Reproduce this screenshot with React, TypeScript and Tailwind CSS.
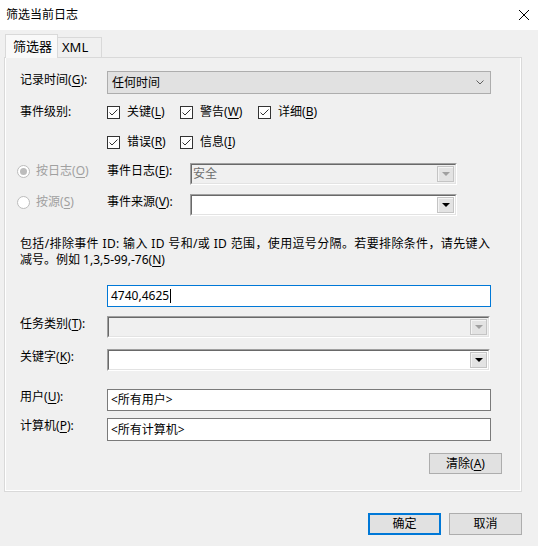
import React from "react";

function Mn({ k }: { k: string }) {
  return (
    <>
      (<span className="underline underline-offset-[2px] decoration-[1px]">{k}</span>)
    </>
  );
}

function Check({ label }: { label: React.ReactNode }) {
  return (
    <span className="flex items-center gap-[7px]">
      <span className="flex h-[13px] w-[13px] items-center justify-center border border-[#333] bg-white">
        <svg width="11" height="11" viewBox="0 0 11 11">
          <path d="M1.5 5.5 L4 8 L9.5 2.5" fill="none" stroke="#333" strokeWidth="1" />
        </svg>
      </span>
      <span className="leading-[16px]">{label}</span>
    </span>
  );
}

function Radio({ checked, label }: { checked?: boolean; label: React.ReactNode }) {
  return (
    <span className="flex h-[16px] w-[90px] items-center gap-[6px] text-[#a0a0a0]">
      <span className="flex h-[13px] w-[13px] items-center justify-center rounded-full border border-[#bcbcbc] bg-white">
        {checked ? <span className="h-[7px] w-[7px] rounded-full bg-[#bcbcbc]" /> : null}
      </span>
      <span className="leading-[16px]">{label}</span>
    </span>
  );
}

function ArrowButton({ disabled }: { disabled?: boolean }) {
  return (
    <span className="mr-[1px] flex h-[16px] w-[17px] items-center justify-center border border-[#c4c4c4] bg-[#e3e3e3] shadow-[inset_1px_1px_0_#f4f4f4]">
      <svg width="8" height="4" viewBox="0 0 8 4">
        <polygon points="0,0 8,0 4,4" fill={disabled ? "#a0a0a0" : "#000"} />
      </svg>
    </span>
  );
}

function Sunken({
  width,
  disabled,
  value,
}: {
  width: string;
  disabled?: boolean;
  value?: string;
}) {
  return (
    <div
      className={`${width} h-[22px] border border-t-[#a0a0a0] border-l-[#a0a0a0] border-r-white border-b-white`}
    >
      <div
        className={`flex h-full items-center border border-t-[#696969] border-l-[#696969] border-r-[#e3e3e3] border-b-[#e3e3e3] ${
          disabled ? "bg-[#f0f0f0]" : "bg-white"
        }`}
      >
        <span className="flex-1 pl-[1px] leading-[16px] text-[#6d6d6d]">{value}</span>
        <ArrowButton disabled={disabled} />
      </div>
    </div>
  );
}

function Label({ children, w }: { children: React.ReactNode; w: string }) {
  return <span className={`${w} shrink-0 leading-[16px]`}>{children}</span>;
}

export default function App() {
  return (
    <div className="flex h-[546px] w-[538px] flex-col overflow-hidden bg-[#f0f0f0] font-['Noto_Sans','Noto_Sans_CJK_SC',sans-serif] text-[12px] text-black">
      <div className="flex h-[30px] shrink-0 items-center justify-between bg-white pl-[6px] pr-[9px]">
        <span className="leading-[16px]">筛选当前日志</span>
        <svg width="10" height="10" viewBox="0 0 10 10">
          <path d="M0 0 L10 10 M10 0 L0 10" stroke="#000" strokeWidth="1" />
        </svg>
      </div>

      <div className="flex h-[27px] shrink-0 items-end pl-[5px]">
        <div className="relative z-10 -mb-px flex h-[24px] w-[53px] items-center border border-b-0 border-[#d9d9d9] bg-[#f9f9f9] pl-[7px] text-[13px]">
          筛选器
        </div>
        <div className="flex h-[20px] w-[44px] items-center border border-b-0 border-l-0 border-[#d9d9d9] pl-[4px] text-[13px]">
          XML
        </div>
      </div>

      <div className="ml-[4px] flex h-[435px] w-[518px] shrink-0 flex-col border border-[#d9d9d9] shadow-[inset_1px_0_0_#fff,inset_-1px_0_0_#fff,inset_0_-1px_0_#fff]">
        <div className="mt-[13px] flex items-start pl-[15px]">
          <Label w="w-[87px] pt-[1px]">
            记录时间<Mn k="G" />:
          </Label>
          <div className="flex h-[23px] w-[384px] items-center justify-between border border-[#adadad] bg-[#e1e1e1] pl-[4px] pr-[6px]">
            <span className="leading-[16px]">任何时间</span>
            <svg width="8" height="5" viewBox="0 0 8 5">
              <path d="M0.5 0.5 L4 4 L7.5 0.5" fill="none" stroke="#606060" strokeWidth="1" />
            </svg>
          </div>
        </div>

        <div className="mt-[10px] flex h-[16px] items-center pl-[15px]">
          <Label w="w-[87px]">事件级别:</Label>
          <span className="w-[73px]">
            <Check label={<>关键<Mn k="L" /></>} />
          </span>
          <span className="w-[78px]">
            <Check label={<>警告<Mn k="W" /></>} />
          </span>
          <Check label={<>详细<Mn k="B" /></>} />
        </div>

        <div className="mt-[14px] flex h-[16px] items-center pl-[102px]">
          <span className="w-[73px]">
            <Check label={<>错误<Mn k="R" /></>} />
          </span>
          <Check label={<>信息<Mn k="I" /></>} />
        </div>

        <div className="mt-[13px] flex items-start pl-[12px]">
          <Radio checked label={<>按日志<Mn k="O" /></>} />
          <Label w="w-[83px]">
            事件日志<Mn k="E" />:
          </Label>
          <Sunken width="w-[267px]" disabled value="安全" />
        </div>

        <div className="mt-[9px] flex items-start pl-[12px]">
          <Radio label={<>按源<Mn k="S" /></>} />
          <Label w="w-[83px]">
            事件来源<Mn k="V" />:
          </Label>
          <Sunken width="w-[267px]" />
        </div>

        <div className="mt-[20px] h-[32px] whitespace-nowrap pl-[15px]">
          <div className="h-[16px] leading-[16px] tracking-[0.36px]">
            包括/排除事件 ID: 输入 ID 号和/或 ID 范围，使用逗号分隔。若要排除条件，请先键入
          </div>
          <div className="h-[16px] leading-[16px]">
            减号。例如 1,3,5-99,-76<Mn k="N" />
          </div>
        </div>

        <div className="mt-[17px] flex pl-[102px]">
          <div className="flex h-[22px] w-[384px] items-center border border-[#0078d7] bg-white pl-[3px]">
            <span className="leading-[16px]">4740,4625</span>
            <span className="ml-px h-[14px] w-px bg-black" />
          </div>
        </div>

        <div className="mt-[9px] flex items-start pl-[15px]">
          <Label w="w-[87px]">
            任务类别<Mn k="T" />:
          </Label>
          <Sunken width="w-[383px]" disabled />
        </div>

        <div className="mt-[11px] flex items-start pl-[15px]">
          <Label w="w-[87px]">
            关键字<Mn k="K" />:
          </Label>
          <Sunken width="w-[383px]" />
        </div>

        <div className="mt-[18px] flex items-start pl-[15px]">
          <Label w="w-[87px]">
            用户<Mn k="U" />:
          </Label>
          <div className="flex h-[22px] w-[384px] items-center border border-[#7a7a7a] bg-white pl-[3px]">
            <span className="leading-[16px]">&lt;所有用户&gt;</span>
          </div>
        </div>

        <div className="mt-[7px] flex items-start pl-[15px]">
          <Label w="w-[87px]">
            计算机<Mn k="P" />:
          </Label>
          <div className="flex h-[23px] w-[384px] items-center border border-[#7a7a7a] bg-white pl-[3px]">
            <span className="leading-[16px]">&lt;所有计算机&gt;</span>
          </div>
        </div>

        <div className="mt-[12px] flex justify-end pr-[19px]">
          <button className="flex h-[21px] w-[73px] items-center justify-center border border-[#adadad] bg-[#e1e1e1] leading-[16px]">
            清除<Mn k="A" />
          </button>
        </div>
      </div>

      <div className="mt-[21px] flex justify-end gap-[8px] pr-[16px]">
        <button className="flex h-[22px] w-[73px] items-center justify-center border-2 border-[#0078d7] bg-[#e1e1e1] leading-[16px]">
          确定
        </button>
        <button className="flex h-[22px] w-[73px] items-center justify-center border border-[#adadad] bg-[#e1e1e1] leading-[16px]">
          取消
        </button>
      </div>
    </div>
  );
}
